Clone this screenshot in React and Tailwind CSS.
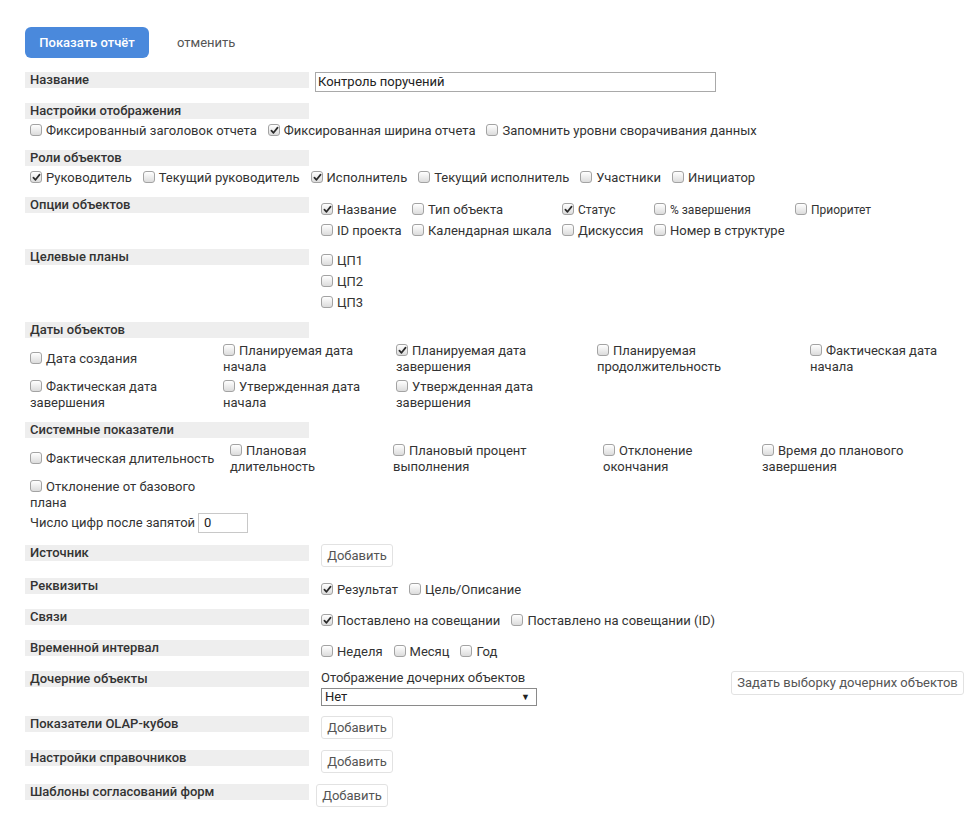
import React from "react";

const Box = ({ checked }) => (
  <span className="relative inline-block w-[12px] h-[12px] rounded-[3px] border border-[#a3a3a3] bg-linear-to-b from-white to-[#dcdcdc] align-[-1px] mr-[4px] shrink-0">
    {checked && (
      <svg className="absolute left-[1px] top-[1px]" width="9" height="9" viewBox="0 0 9 9">
        <path d="M1.4 4.6 L3.5 6.8 L7.6 1.6" stroke="#2a2a2a" strokeWidth="1.7" fill="none" strokeLinecap="round" strokeLinejoin="round" />
      </svg>
    )}
  </span>
);

const Check = ({ checked, children, className = "" }) => (
  <span className={`whitespace-nowrap ${className}`}>
    <Box checked={checked} />
    {children}
  </span>
);

const Bar = ({ children, className = "" }) => (
  <div className={`w-[284px] h-[16px] shrink-0 bg-[#eeeeee] pl-[5px] font-medium leading-[16px] text-[#333] ${className}`}>
    {children}
  </div>
);

const AddBtn = ({ className = "" }) => (
  <div className={`w-[72px] h-[23px] shrink-0 flex items-center justify-center border border-[#e2e2e2] rounded-[3px] bg-white text-[#555] ${className}`}>
    Добавить
  </div>
);

const Cell = ({ checked, children }) => (
  <div className="self-center py-[2px] whitespace-nowrap">
    <Box checked={checked} />
    {children}
  </div>
);

export default function App() {
  return (
    <div className="min-h-[817px] bg-white pl-[25px] pr-[10px] pt-[27px] font-['Roboto','Liberation_Sans',sans-serif] text-[13px] leading-[16px] text-[#333]">
      {/* top buttons */}
      <div className="flex items-center h-[31px]">
        <div className="w-[124px] h-[31px] rounded-[6px] bg-[#4a89dc] text-white font-medium flex items-center justify-center">
          Показать отчёт
        </div>
        <span className="ml-[28px] text-[#555]">отменить</span>
      </div>

      {/* Название */}
      <div className="flex mt-[14px]">
        <Bar>Название</Bar>
        <div className="ml-[6px] w-[401px] h-[20px] border border-[#a9a9a9] pl-[2px] flex items-center text-[#222]">
          Контроль поручений
        </div>
      </div>

      {/* Настройки отображения */}
      <div className="mt-[11px]">
        <Bar>Настройки отображения</Bar>
        <div className="mt-[4px] h-[16px] pl-[5px] flex items-center gap-[11px]">
          <Check>Фиксированный заголовок отчета</Check>
          <Check checked>Фиксированная ширина отчета</Check>
          <Check>Запомнить уровни сворачивания данных</Check>
        </div>
      </div>

      {/* Роли объектов */}
      <div className="mt-[11px]">
        <Bar>Роли объектов</Bar>
        <div className="mt-[4px] h-[16px] pl-[5px] flex items-center gap-[11px]">
          <Check checked>Руководитель</Check>
          <Check>Текущий руководитель</Check>
          <Check checked>Исполнитель</Check>
          <Check>Текущий исполнитель</Check>
          <Check>Участники</Check>
          <Check>Инициатор</Check>
        </div>
      </div>

      {/* Опции объектов */}
      <div className="flex mt-[11px]">
        <Bar>Опции объектов</Bar>
        <div className="ml-[12px] pt-[2px] grid grid-cols-[91px_150px_92px_141px_auto] auto-rows-[21px] items-center">
          <Check checked>Название</Check>
          <Check>Тип объекта</Check>
          <Check checked className="text-[12px]">Статус</Check>
          <Check className="text-[12px]">% завершения</Check>
          <Check className="text-[12px]">Приоритет</Check>
          <Check>ID проекта</Check>
          <Check>Календарная шкала</Check>
          <Check>Дискуссия</Check>
          <Check>Номер в структуре</Check>
        </div>
      </div>

      {/* Целевые планы */}
      <div className="flex mt-[8px]">
        <Bar>Целевые планы</Bar>
        <div className="ml-[12px] pt-[1px] grid auto-rows-[21px] items-center">
          <Check>ЦП1</Check>
          <Check>ЦП2</Check>
          <Check>ЦП3</Check>
        </div>
      </div>

      {/* Даты объектов */}
      <div className="mt-[9px]">
        <Bar>Даты объектов</Bar>
        <div className="mt-[3px] pl-[5px] grid grid-cols-[193px_173px_201px_213px_1fr] auto-rows-[36px]">
          <Cell>Дата создания</Cell>
          <Cell>Планируемая дата<br />начала</Cell>
          <Cell checked>Планируемая дата<br />завершения</Cell>
          <Cell>Планируемая<br />продолжительность</Cell>
          <Cell>Фактическая дата<br />начала</Cell>
          <Cell>Фактическая дата<br />завершения</Cell>
          <Cell>Утвержденная дата<br />начала</Cell>
          <Cell>Утвержденная дата<br />завершения</Cell>
        </div>
      </div>

      {/* Системные показатели */}
      <div className="mt-[9px]">
        <Bar>Системные показатели</Bar>
        <div className="mt-[3px] pl-[5px] grid grid-cols-[200px_163px_210px_159px_1fr] auto-rows-[36px]">
          <Cell>Фактическая длительность</Cell>
          <Cell>Плановая<br />длительность</Cell>
          <Cell>Плановый процент<br />выполнения</Cell>
          <Cell>Отклонение<br />окончания</Cell>
          <Cell>Время до планового<br />завершения</Cell>
          <Cell>Отклонение от базового<br />плана</Cell>
        </div>
        <div className="pl-[5px] h-[20px] flex items-center">
          <span>Число цифр после запятой</span>
          <div className="ml-[3px] w-[50px] h-[20px] border border-[#c8c8c8] pl-[5px] flex items-center text-[#222]">0</div>
        </div>
      </div>

      {/* Источник */}
      <div className="flex mt-[11px] h-[34px]">
        <Bar className="mt-[1px]">Источник</Bar>
        <AddBtn className="ml-[12px]" />
      </div>

      {/* Реквизиты */}
      <div className="flex h-[31px]">
        <Bar>Реквизиты</Bar>
        <div className="ml-[12px] h-[24px] flex items-center gap-[11px]">
          <Check checked>Результат</Check>
          <Check>Цель/Описание</Check>
        </div>
      </div>

      {/* Связи */}
      <div className="flex h-[31px]">
        <Bar>Связи</Bar>
        <div className="ml-[12px] h-[24px] flex items-center gap-[11px]">
          <Check checked>Поставлено на совещании</Check>
          <Check>Поставлено на совещании (ID)</Check>
        </div>
      </div>

      {/* Временной интервал */}
      <div className="flex h-[31px]">
        <Bar>Временной интервал</Bar>
        <div className="ml-[12px] h-[24px] flex items-center gap-[11px]">
          <Check>Неделя</Check>
          <Check>Месяц</Check>
          <Check>Год</Check>
        </div>
      </div>

      {/* Дочерние объекты */}
      <div className="flex h-[45px]">
        <Bar>Дочерние объекты</Bar>
        <div className="ml-[12px] flex-1 flex items-start justify-between">
          <div>
            <div className="h-[16px] leading-[16px] -mt-[1px]">Отображение дочерних объектов</div>
            <div className="mt-[2px] w-[216px] h-[18px] border border-[#8a8a8a] pl-[3px] pr-[6px] flex items-center justify-between text-[#222]">
              <span>Нет</span>
              <span className="text-[9px] leading-none">▼</span>
            </div>
          </div>
          <div className="w-[233px] h-[24px] border border-[#e2e2e2] rounded-[3px] flex items-center justify-center text-[#555]">
            Задать выборку дочерних объектов
          </div>
        </div>
      </div>

      {/* OLAP */}
      <div className="flex h-[34px]">
        <Bar>Показатели OLAP-кубов</Bar>
        <AddBtn className="ml-[12px]" />
      </div>

      {/* Справочники */}
      <div className="flex h-[34px]">
        <Bar>Настройки справочников</Bar>
        <AddBtn className="ml-[12px]" />
      </div>

      {/* Шаблоны */}
      <div className="flex h-[33px]">
        <Bar>Шаблоны согласований форм</Bar>
        <AddBtn className="ml-[7px]" />
      </div>
    </div>
  );
}
